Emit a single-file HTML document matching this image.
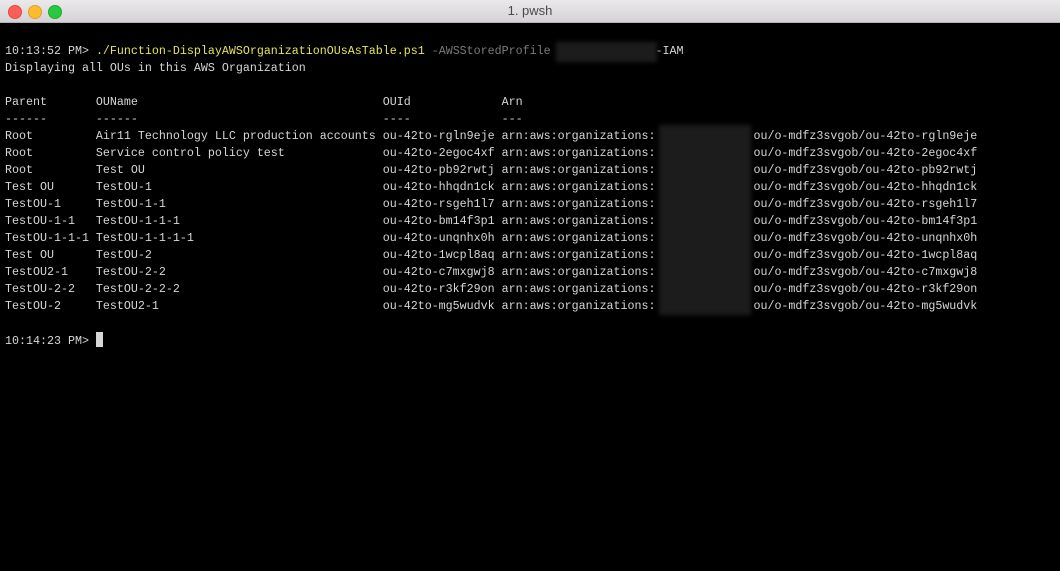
<!DOCTYPE html>
<html><head><style>
html,body{margin:0;padding:0;width:1060px;height:571px;overflow:hidden;background:#000;}
.tb{position:absolute;left:0;top:0;width:1060px;height:22px;background:linear-gradient(#ebe9eb,#d5d3d5);border-bottom:1px solid #b5b3b5;font-family:"Liberation Sans",sans-serif;font-size:13px;color:#4a4a4a;text-align:center;line-height:22px;}
.d{position:absolute;top:5px;width:12px;height:12px;border-radius:50%;}
pre{position:absolute;left:5px;top:43px;margin:0;font-family:"Liberation Mono",monospace;font-size:11.67px;line-height:17px;color:#d6d6d6;}
.y{color:#e6e35a}.g{color:#7a7a7a}
.blur{position:absolute;background:#1c1c1c;filter:blur(2px);}
.cur{display:inline-block;width:7px;height:15px;background:#d6d6d6;vertical-align:-3px;}
</style></head><body>
<div class="tb">1. pwsh
<div class="d" style="left:8px;background:#fc5f57;border:0.5px solid #de4a42"></div>
<div class="d" style="left:28px;background:#fdbc2e;border:0.5px solid #dea123"></div>
<div class="d" style="left:48px;background:#28c840;border:0.5px solid #1dac2c"></div>
</div>
<pre>10:13:52 PM&gt; <span class="y">./Function-DisplayAWSOrganizationOUsAsTable.ps1</span> <span class="g">-AWSStoredProfile</span>               -IAM
Displaying all OUs in this AWS Organization

Parent       OUName                                   OUId             Arn
------       ------                                   ----             ---
Root         Air11 Technology LLC production accounts ou-42to-rgln9eje arn:aws:organizations:              ou/o-mdfz3svgob/ou-42to-rgln9eje
Root         Service control policy test              ou-42to-2egoc4xf arn:aws:organizations:              ou/o-mdfz3svgob/ou-42to-2egoc4xf
Root         Test OU                                  ou-42to-pb92rwtj arn:aws:organizations:              ou/o-mdfz3svgob/ou-42to-pb92rwtj
Test OU      TestOU-1                                 ou-42to-hhqdn1ck arn:aws:organizations:              ou/o-mdfz3svgob/ou-42to-hhqdn1ck
TestOU-1     TestOU-1-1                               ou-42to-rsgeh1l7 arn:aws:organizations:              ou/o-mdfz3svgob/ou-42to-rsgeh1l7
TestOU-1-1   TestOU-1-1-1                             ou-42to-bm14f3p1 arn:aws:organizations:              ou/o-mdfz3svgob/ou-42to-bm14f3p1
TestOU-1-1-1 TestOU-1-1-1-1                           ou-42to-unqnhx0h arn:aws:organizations:              ou/o-mdfz3svgob/ou-42to-unqnhx0h
Test OU      TestOU-2                                 ou-42to-1wcpl8aq arn:aws:organizations:              ou/o-mdfz3svgob/ou-42to-1wcpl8aq
TestOU2-1    TestOU-2-2                               ou-42to-c7mxgwj8 arn:aws:organizations:              ou/o-mdfz3svgob/ou-42to-c7mxgwj8
TestOU-2-2   TestOU-2-2-2                             ou-42to-r3kf29on arn:aws:organizations:              ou/o-mdfz3svgob/ou-42to-r3kf29on
TestOU-2     TestOU2-1                                ou-42to-mg5wudvk arn:aws:organizations:              ou/o-mdfz3svgob/ou-42to-mg5wudvk

10:14:23 PM&gt; <span class="cur"></span>
</pre>
<div class="blur" style="left:556px;top:42px;width:101px;height:20px"></div>
<div class="blur" style="left:659px;top:125px;width:92px;height:190px"></div>
</body></html>
